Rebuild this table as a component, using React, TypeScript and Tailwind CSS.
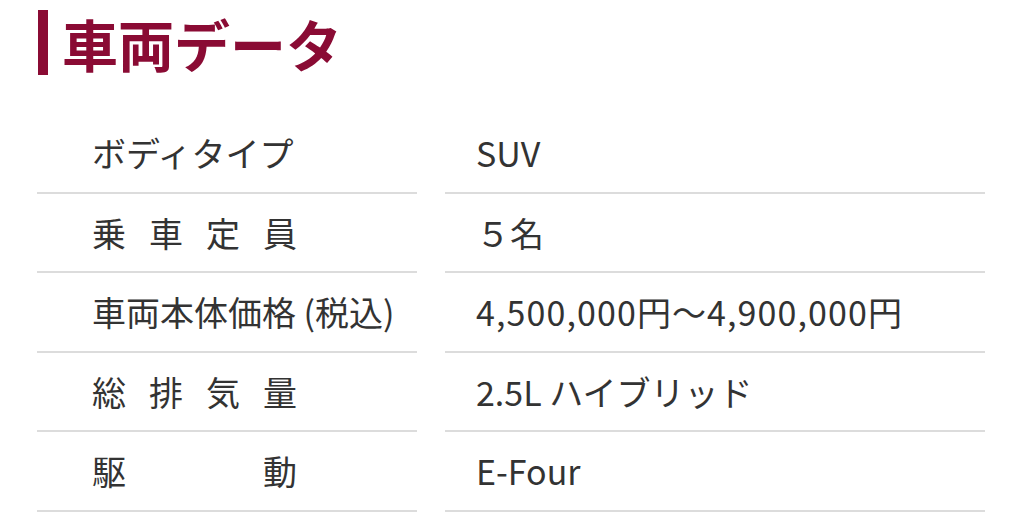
const rows: { label: string[]; value: string; wide?: boolean }[] = [
  { label: ['ボディタイプ'], value: 'SUV' },
  { label: ['乗', '車', '定', '員'], value: '５名' },
  { label: ['車両本体価格 (税込)'], value: '4,500,000円～4,900,000円', wide: true },
  { label: ['総', '排', '気', '量'], value: '2.5L ハイブリッド' },
  { label: ['駆', '動'], value: 'E-Four' },
];

export default function App() {
  return (
    <div
      className="h-[531px] w-[1024px] overflow-hidden bg-white"
      style={{ fontFamily: '"Noto Sans CJK JP", "Noto Sans", sans-serif' }}
    >
      {/* Heading */}
      <div className="ml-[38px] mt-[10px] flex items-center">
        <div className="h-[65px] w-[10px] bg-[#8a0b34]" />
        <h2 className="ml-[14px] text-[56px] font-bold leading-none text-[#8a0b34]">
          車両データ
        </h2>
      </div>

      {/* Spec table */}
      <div className="ml-[37px] mt-[39px] w-[948px]">
        {rows.map((row) => (
          <div key={row.value} className="grid grid-cols-[380px_540px] gap-x-[28px]">
            <div className="flex h-[79.5px] items-center border-b-2 border-[#dcdcdc] pl-[55px] text-[34px] text-[#333333]">
              {row.label.length > 1 ? (
                <div className="flex w-[205px] justify-between">
                  {row.label.map((ch) => (
                    <span key={ch}>{ch}</span>
                  ))}
                </div>
              ) : (
                <span>{row.label[0]}</span>
              )}
            </div>
            <div
              className={
                row.wide
                  ? 'flex h-[79.5px] items-center border-b-2 border-[#dcdcdc] pl-[31px] text-[34px] tracking-[1.1px] text-[#333333]'
                  : 'flex h-[79.5px] items-center border-b-2 border-[#dcdcdc] pl-[31px] text-[34px] text-[#333333]'
              }
            >
              {row.value}
            </div>
          </div>
        ))}
      </div>
    </div>
  );
}
